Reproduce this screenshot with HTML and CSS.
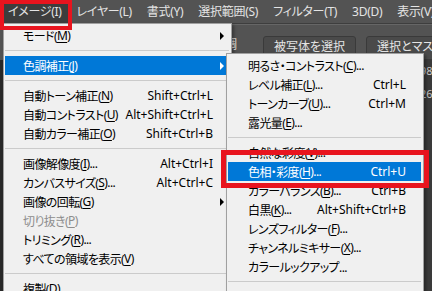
FILE: index.html
```html
<!DOCTYPE html>
<html lang="ja">
<head>
    <meta charset="UTF-8">
    <title>イメージ メニュー</title>
    <link rel="stylesheet" href="styles.css">
</head>
<body>
    <div class="app">
        <div class="menubar">
            <span class="menubar-item active">イメージ(I)</span>
            <span class="menubar-item">レイヤー(L)</span>
            <span class="menubar-item">書式(Y)</span>
            <span class="menubar-item">選択範囲(S)</span>
            <span class="menubar-item">フィルター(T)</span>
            <span class="menubar-item">3D(D)</span>
            <span class="menubar-item">表示(V)</span>
        </div>
        <div class="optionsbar">
            <span class="options-label">調整</span>
            <span class="options-divider"></span>
            <span class="options-button">被写体を選択</span>
            <span class="options-button">選択とマスク...</span>
        </div>
        <div class="workspace">
            <div class="doc-strip">
                <span>98</span>
                <span>26</span>
            </div>
        </div>
    </div>

    <!-- イメージ menu -->
    <div class="menu main-menu">
        <div class="menu-item has-sub">モード(<u>M</u>)</div>
        <div class="menu-sep"></div>
        <div class="menu-item has-sub selected">色調補正(<u>J</u>)</div>
        <div class="menu-sep"></div>
        <div class="menu-item">自動トーン補正(<u>N</u>)<span class="shortcut">Shift+Ctrl+L</span></div>
        <div class="menu-item">自動コントラスト(<u>U</u>)<span class="shortcut">Alt+Shift+Ctrl+L</span></div>
        <div class="menu-item">自動カラー補正(<u>O</u>)<span class="shortcut">Shift+Ctrl+B</span></div>
        <div class="menu-sep"></div>
        <div class="menu-item">画像解像度(<u>I</u>)...<span class="shortcut">Alt+Ctrl+I</span></div>
        <div class="menu-item">カンバスサイズ(<u>S</u>)...<span class="shortcut">Alt+Ctrl+C</span></div>
        <div class="menu-item has-sub">画像の回転(<u>G</u>)</div>
        <div class="menu-item disabled">切り抜き(<u>P</u>)</div>
        <div class="menu-item">トリミング(<u>R</u>)...</div>
        <div class="menu-item">すべての領域を表示(<u>V</u>)</div>
        <div class="menu-sep"></div>
        <div class="menu-item">複製(<u>D</u>)...</div>
    </div>

    <!-- 色調補正 submenu -->
    <div class="menu sub-menu">
        <div class="menu-item">明るさ・コントラスト(<u>C</u>)...</div>
        <div class="menu-item">レベル補正(<u>L</u>)...<span class="shortcut">Ctrl+L</span></div>
        <div class="menu-item">トーンカーブ(<u>U</u>)...<span class="shortcut">Ctrl+M</span></div>
        <div class="menu-item">露光量(<u>E</u>)...</div>
        <div class="menu-sep"></div>
        <div class="menu-item">自然な彩度(<u>V</u>)...</div>
        <div class="menu-item selected">色相・彩度(<u>H</u>)...<span class="shortcut">Ctrl+U</span></div>
        <div class="menu-item">カラーバランス(<u>B</u>)...<span class="shortcut">Ctrl+B</span></div>
        <div class="menu-item">白黒(<u>K</u>)...<span class="shortcut">Alt+Shift+Ctrl+B</span></div>
        <div class="menu-item">レンズフィルター(<u>F</u>)...</div>
        <div class="menu-item">チャンネルミキサー(<u>X</u>)...</div>
        <div class="menu-item">カラールックアップ...</div>
        <div class="menu-sep"></div>
    </div>

    <div class="callout callout-menu"></div>
    <div class="callout callout-hue"></div>
</body>
</html>
```

FILE: styles.css
```css
* {
    margin: 0;
    padding: 0;
    box-sizing: border-box;
}

body {
    font-family: "Noto Sans", "Noto Sans CJK JP", sans-serif;
    font-size: 12px;
    font-feature-settings: "palt" 1;
    background: #3c3c3c;
    width: 432px;
    height: 291px;
    overflow: hidden;
    position: relative;
}

.app {
    display: flex;
    flex-direction: column;
    height: 100%;
}

/* Photoshop menu bar */
.menubar {
    display: flex;
    height: 24px;
    background: #535353;
    border-bottom: 1px solid #3e3e3e;
    color: #e4e4e4;
    line-height: 23px;
    letter-spacing: -0.3px;
}

.menubar-item {
    padding: 0 7px 0 8px;
    white-space: nowrap;
}

.menubar-item.active {
    background: #3d3d3d;
}

/* options bar */
.optionsbar {
    display: flex;
    align-items: flex-start;
    height: 36px;
    background: #535353;
    border-top: 1px solid #666;
    padding: 11px 0 0 225px;
    color: #e4e4e4;
}

.options-label {
    line-height: 18px;
}

.options-divider {
    width: 1px;
    height: 26px;
    margin: -5px 18px 0 8px;
    background: #3a3a3a;
}

.options-button {
    height: 24px;
    line-height: 20px;
    padding: 0 10px;
    margin-right: 10px;
    border: 1px solid #3a3a3a;
    border-radius: 3px;
    background: #4a4a4a;
    white-space: nowrap;
    width: 97px;
    text-align: center;
}

.options-button + .options-button {
    width: 90px;
}

.workspace {
    flex: 1;
    background: #282828;
    display: flex;
    justify-content: flex-end;
}

.doc-strip {
    width: 12px;
    background: #3a3a3a;
    color: #c8c8c8;
    display: flex;
    flex-direction: column;
    gap: 8px;
    padding-top: 3px;
    font-size: 11px;
    white-space: nowrap;
}

/* dropdown menus */
.menu {
    position: absolute;
    background: #f0f0f0;
    border: 1px solid #a0a0a0;
    box-shadow: 2px 2px 3px rgba(0, 0, 0, 0.35);
    padding: 2px 0;
    color: #000;
}

.main-menu {
    left: 3px;
    top: 23px;
    width: 229px;
    height: 290px;
}

.sub-menu {
    left: 226px;
    top: 53px;
    width: 198px;
    height: 260px;
}

.menu-item {
    position: relative;
    display: flex;
    align-items: center;
    height: 19px;
    white-space: nowrap;
    letter-spacing: -0.6px;
}

.main-menu .menu-item {
    margin: 0 4px 0 1px;
    padding: 0 14px 0 18px;
}

.sub-menu .menu-item {
    margin: 0 2px 0 1px;
    padding: 0 15px 0 20px;
}

.menu-item u {
    text-decoration-thickness: 1px;
    text-underline-offset: 2px;
}

.shortcut {
    margin-left: auto;
    letter-spacing: 0;
}

.menu-item.selected {
    background: #0078d7;
    color: #fff;
}

.menu-item.disabled {
    color: #8d8d8d;
}

.has-sub::after {
    content: "";
    position: absolute;
    right: 3px;
    top: 6px;
    border-left: 4px solid #000;
    border-top: 4px solid transparent;
    border-bottom: 4px solid transparent;
}

.has-sub.selected::after {
    border-left-color: #fff;
}

.menu-sep {
    height: 1px;
    background: #cbcbcb;
    margin: 5px 2px 5px 1px;
}

/* red highlight boxes */
.callout {
    position: absolute;
    border: 4px solid #e8141e;
}

.callout-menu {
    left: 0;
    top: 0;
    width: 72px;
    height: 30px;
}

.callout-hue {
    left: 221px;
    top: 150px;
    width: 208px;
    height: 38px;
    border-width: 5px;
}
```
